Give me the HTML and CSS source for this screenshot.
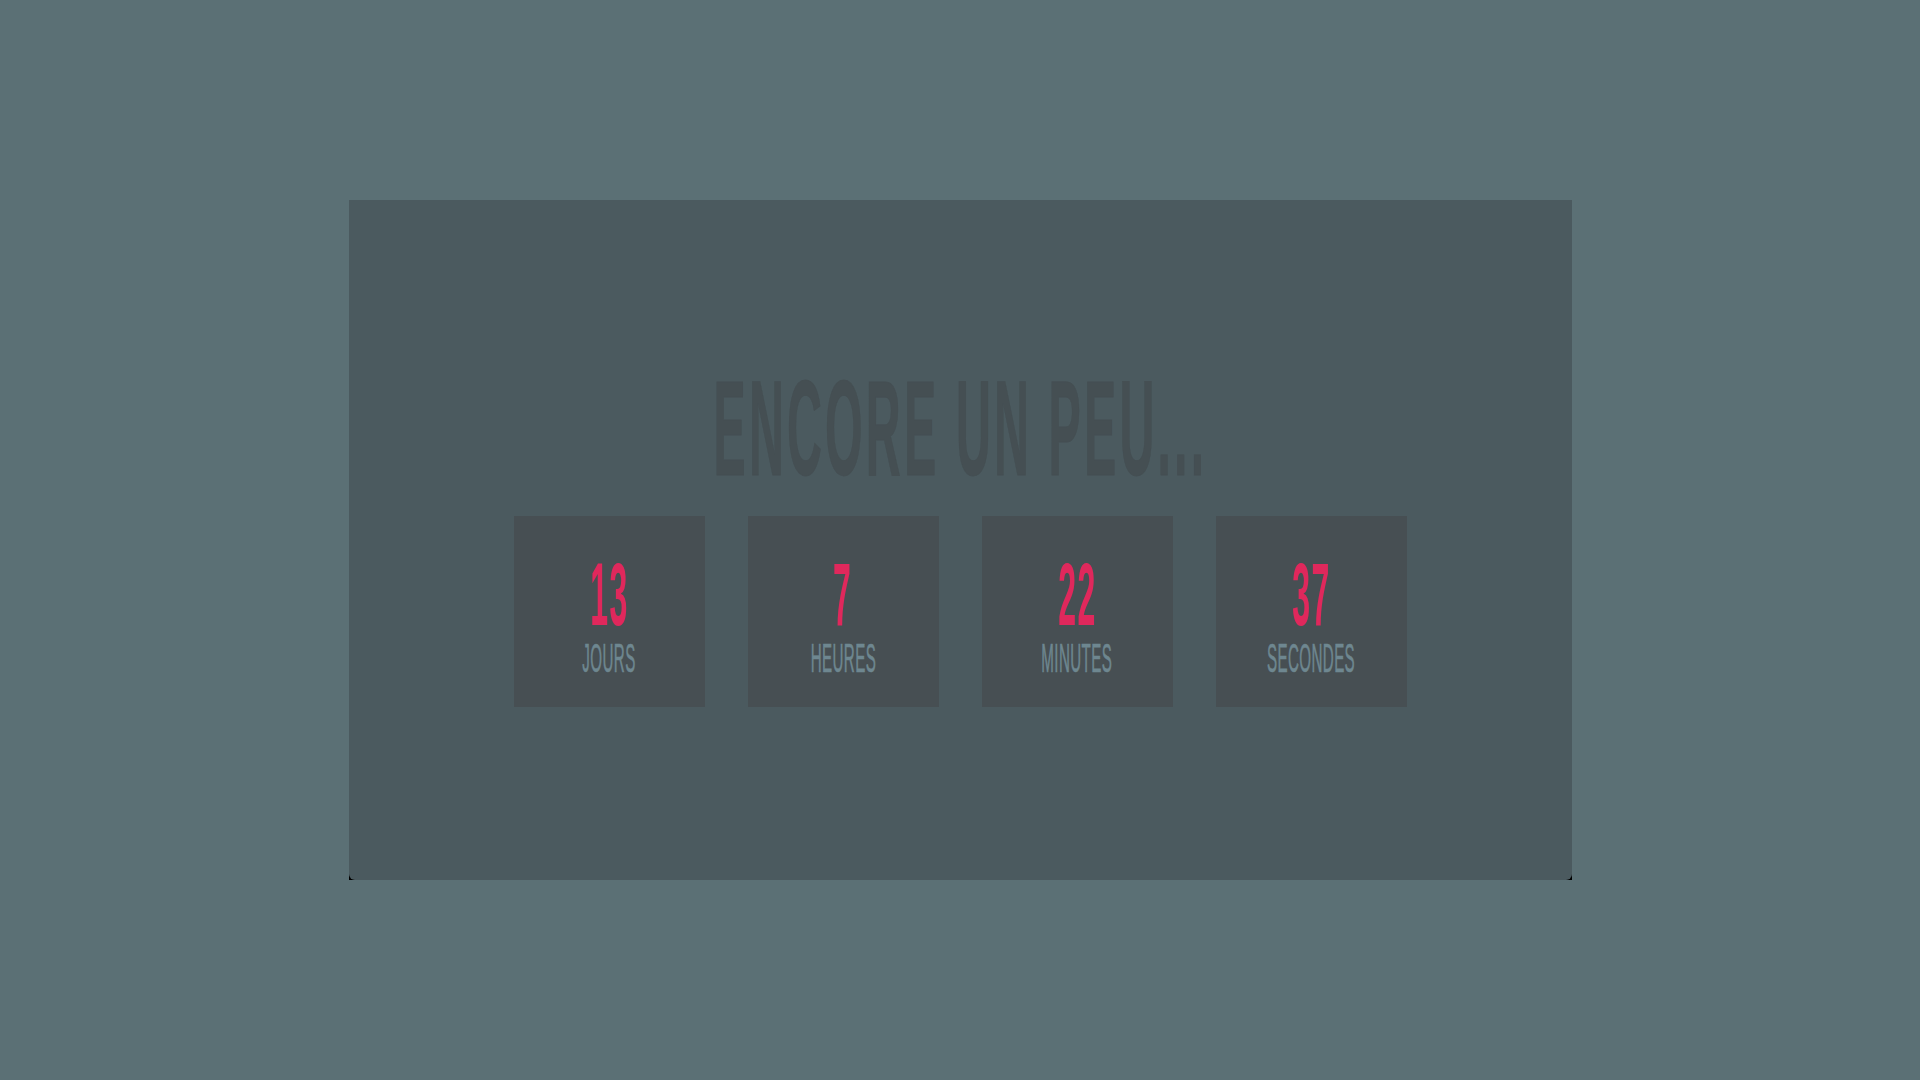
FILE: index.html
```html
<!DOCTYPE html>
<html lang="fr">
<head>
<meta charset="utf-8">
<title>Encore un peu...</title>
<link rel="stylesheet" href="styles.css">
</head>
<body>
<main class="stage">
  <div class="frame">
    <section class="card">
      <h1 class="title"><span class="squeeze title-text">ENCORE UN PEU...</span></h1>
      <div class="counters">
        <div class="counter">
          <span class="squeeze num">13</span>
          <span class="squeeze label">JOURS</span>
        </div>
        <div class="counter">
          <span class="squeeze num">7</span>
          <span class="squeeze label">HEURES</span>
        </div>
        <div class="counter">
          <span class="squeeze num">22</span>
          <span class="squeeze label">MINUTES</span>
        </div>
        <div class="counter">
          <span class="squeeze num">37</span>
          <span class="squeeze label">SECONDES</span>
        </div>
      </div>
    </section>
  </div>
</main>
</body>
</html>
```

FILE: styles.css
```css
html, body {
  margin: 0;
  padding: 0;
  height: 100%;
}
body {
  background: #5b7075;
  font-family: "Liberation Sans", Arial, sans-serif;
}
.stage {
  height: 1080px;
  display: flex;
  align-items: center;
  justify-content: center;
}
.frame {
  background: #000;
  width: 1223px;
  height: 680px;
  margin-top: -1px;
}
.card {
  width: 100%;
  height: 100%;
  background: #4b5a5f;
  border-radius: 0 0 6px 6px;
  display: flex;
  flex-direction: column;
  align-items: center;
  justify-content: center;
  box-sizing: border-box;
  padding-top: 6px;
}
.squeeze {
  display: inline-block;
  white-space: nowrap;
}
.title {
  margin: 0 0 38px 0;
  height: 100px;
  font-size: 136px;
  line-height: 100px;
  font-weight: 700;
  color: #454f53;
  -webkit-text-stroke: 0.8px #454f53;
  text-align: center;
  display: flex;
  justify-content: center;
}
.title-text {
  transform: scaleX(0.355);
  letter-spacing: 9px;
}
.counters {
  display: flex;
  gap: 43px;
}
.counter {
  width: 191px;
  height: 191px;
  background: #474f53;
  box-sizing: border-box;
  padding-top: 46px;
  display: flex;
  flex-direction: column;
  align-items: center;
}
.num {
  font-size: 89px;
  line-height: 64px;
  height: 64px;
  font-weight: 700;
  color: #e0285c;
  transform: scaleX(0.36);
  letter-spacing: 4px;
}
.label {
  margin-top: 18px;
  font-size: 41px;
  line-height: 29px;
  height: 29px;
  font-weight: 400;
  color: #6e8790;
  -webkit-text-stroke: 0.6px #6e8790;
  transform: scaleX(0.37);
  letter-spacing: 1px;
}
```
